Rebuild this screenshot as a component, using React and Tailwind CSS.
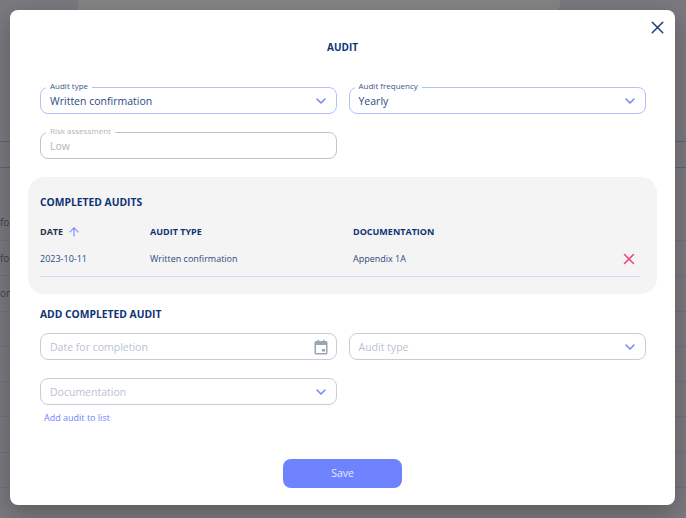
import React from 'react';
import { ChevronDown, ArrowUp, X } from 'lucide-react';

const navy = 'text-[#0f3375]';

const Field = ({ label, value, placeholder, disabled, active, chevron, icon }) => (
  <div
    className={`relative flex h-[27px] w-[297px] items-center justify-between rounded-[8px] border pl-[9px] pr-[7px] ${
      active ? 'border-[#b4bfff]' : disabled ? 'border-[#c4c4c4]' : 'border-[#c6ced9]'
    }`}
  >
    {label && (
      <span
        className={`absolute left-[5px] top-[-8px] bg-white px-[4px] text-[8px] leading-[12px] ${
          disabled ? 'text-[#b5b5b5]' : 'text-[#3c5688]'
        }`}
      >
        {label}
      </span>
    )}
    <span className={`pt-[2px] text-[10.5px] ${value && !disabled ? 'text-[#2c4a80]' : disabled ? 'text-[#b5b5b5]' : 'text-[#b9c2d0]'}`}>
      {value || placeholder}
    </span>
    {chevron && <ChevronDown size={16} strokeWidth={2.2} className="mt-[1px] text-[#6f83ff]" />}
    {icon}
  </div>
);

const CalendarIcon = () => (
  <svg width="16" height="16" viewBox="0 0 16 16" className="mr-[0px] text-[#9aa5b5]">
    <path
      fill="currentColor"
      d="M3 2h1.500V.8H6V2h4V.8h1.500V2H13a1.500 1.500 0 0 1 1.500 1.500v10.500A1.500 1.500 0 0 1 13 15.500H3A1.500 1.500 0 0 1 1.500 14V3.500A1.500 1.500 0 0 1 3 2zm0 4v8h10V6H3zm6 4h3v2.500H9V10z"
    />
  </svg>
);

const App = () => {
  return (
    <div className="relative h-[518px] w-[686px] overflow-hidden bg-[#7a7a7e] font-['Open_Sans','Noto_Sans',sans-serif]">
      {/* page behind the dialog */}
      <div className="absolute left-[78px] top-0 h-[14px] w-[482px] rounded-br-[10px] bg-[#848484]" />
      <div className="absolute left-0 top-[141px] h-[27px] w-full border-y border-[#5d6180]" />
      <div className="absolute left-0 top-[240px] h-[36px] w-full border-y border-[#6d6f88]" />
      <div className="absolute left-0 top-[311px] h-[36px] w-full border-y border-[#6d6f88]" />
      <div className="absolute left-0 top-[381px] h-[36px] w-full border-y border-[#6d6f88]" />
      <div className="absolute left-0 top-[452px] h-[36px] w-full border-y border-[#6d6f88]" />
      <span className="absolute left-0 top-[215px] text-[10px] text-[#3f4350]">for</span>
      <span className="absolute left-0 top-[251px] text-[10px] text-[#3f4350]">for</span>
      <span className="absolute left-0 top-[286px] text-[10px] text-[#3f4350]">on</span>

      {/* dialog */}
      <div className="absolute left-[10px] top-[10px] flex h-[495px] w-[665px] flex-col rounded-[8px] bg-white px-[30px] shadow-[0_8px_24px_rgba(0,0,0,0.25)]">
        <button className="absolute right-[7px] top-[7px] text-[#1c3f7c]">
          <X size={21} strokeWidth={1.7} />
        </button>

        <h2 className={`mt-[29px] text-center text-[10px] font-bold leading-[16px] ${navy}`}>AUDIT</h2>

        <div className="mt-[32px] grid grid-cols-[297px_297px] gap-x-[11.5px] gap-y-[18px]">
          <Field label="Audit type" value="Written confirmation" active chevron />
          <Field label="Audit frequency" value="Yearly" active chevron />
          <Field label="Risk assessment" value="Low" disabled />
        </div>

        <section className="-mx-[12px] mt-[18px] h-[117px] rounded-[16px] bg-[#f4f4f4] px-[12px] pt-[17px]">
          <h3 className={`text-[10.3px] font-bold leading-[16px] ${navy}`}>COMPLETED AUDITS</h3>
          <div className="mt-[15px] grid w-[600px] grid-cols-[110px_203px_1fr] items-center text-[9px] font-bold leading-[14px]">
            <span className="flex items-center gap-[4px] text-[#28324a]">
              DATE <ArrowUp size={14} strokeWidth={1.8} className="text-[#6f83ff]" />
            </span>
            <span className={navy}>AUDIT TYPE</span>
            <span className={navy}>DOCUMENTATION</span>
          </div>
          <div className="mt-[5px] grid h-[33px] w-[600px] grid-cols-[110px_203px_1fr_auto] items-center border-b border-[#d3dcfb] pb-[3px] text-[9px] text-[#2c4a80]">
            <span>2023-10-11</span>
            <span>Written confirmation</span>
            <span>Appendix 1A</span>
            <X size={18} strokeWidth={2} className="mr-[2px] text-[#f0427a]" />
          </div>
        </section>

        <h3 className={`mt-[12px] text-[10.3px] font-bold leading-[16px] ${navy}`}>ADD COMPLETED AUDIT</h3>

        <div className="mt-[11px] grid grid-cols-[297px_297px] gap-x-[11.5px] gap-y-[18px]">
          <Field placeholder="Date for completion" icon={<CalendarIcon />} />
          <Field placeholder="Audit type" chevron />
          <Field placeholder="Documentation" chevron />
        </div>

        <a className="ml-[4px] mt-[6px] text-[9px] leading-[14px] text-[#6f83ff]">Add audit to list</a>

        <button className="mx-auto mt-[34px] h-[29px] w-[119px] rounded-[8px] bg-[#6f83ff] text-[10.5px] text-[#e6e9ff]">
          Save
        </button>
      </div>
    </div>
  );
};

export default App;
